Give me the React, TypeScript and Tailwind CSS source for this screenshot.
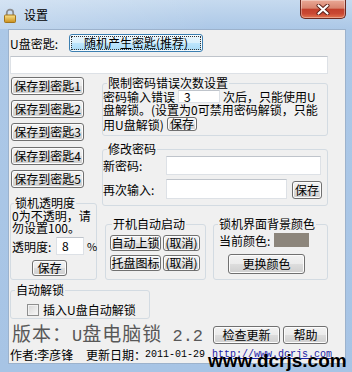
import React from "react";

const cjk = "font-['Noto_Sans_CJK_SC',sans-serif]";
const mono = "font-['Liberation_Mono',monospace]";

function Btn({ className = "", children }: { className?: string; children: React.ReactNode }) {
  return (
    <button
      type="button"
      className={`flex shrink-0 items-center justify-center rounded-[3px] border border-[#707070] bg-[linear-gradient(#f2f2f2_0%,#ebebeb_50%,#dddddd_50%,#cfcfcf_100%)] p-0 text-[12px] leading-[12px] text-black shadow-[inset_0_0_0_1px_#fcfcfc] ${className}`}
    >
      {children}
    </button>
  );
}

function Field({ className = "", value = "" }: { className?: string; value?: string }) {
  return (
    <div className={`flex shrink-0 items-center border border-[#dde1e6] border-t-[#bfc4cb] bg-white pl-[5px] text-[12px] leading-[12px] ${className}`}>
      {value}
    </div>
  );
}

function Group({
  title,
  className = "",
  legend = "",
  children,
}: {
  title: string;
  className?: string;
  legend?: string;
  children: React.ReactNode;
}) {
  return (
    <fieldset className={`min-w-0 shrink-0 rounded-[3px] border border-[#d3dbe2] ${className}`}>
      <legend className={`px-[1px] text-[12px] leading-[14px] ${legend}`}>{title}</legend>
      {children}
    </fieldset>
  );
}

function Lock() {
  return (
    <svg width="14" height="15" viewBox="0 0 14 15">
      <defs>
        <linearGradient id="gold" x1="0" y1="0" x2="0" y2="1">
          <stop offset="0" stopColor="#fbe48a" />
          <stop offset="1" stopColor="#c98d1c" />
        </linearGradient>
      </defs>
      <path d="M3.8 7.5V4.8a3.2 3.2 0 0 1 6.4 0v2.7" fill="none" stroke="#8d8d8d" strokeWidth="1.8" />
      <rect x="1.5" y="7" width="11" height="7.5" rx="1" fill="url(#gold)" stroke="#a3741a" />
    </svg>
  );
}

export default function App() {
  return (
    <div className={`relative h-[372px] w-[352px] overflow-hidden bg-[linear-gradient(180deg,#c6daef_0px,#acc8e7_29px,#a7c4e5_100%)] text-black ${cjk}`}>
      {/* Title bar */}
      <div className="flex h-[29px] items-center bg-[linear-gradient(90deg,rgba(255,255,255,0.25),rgba(255,255,255,0)_60%)]">
        <div className="ml-[3px] mt-[1px]">
          <Lock />
        </div>
        <span className="ml-[7px] text-[12px] leading-[12px]">设置</span>
        <div className="flex-1" />
        <div className="mr-[6px] flex h-[19px] w-[46px] shrink-0 items-center justify-center self-start rounded-b-[5px] border border-t-0 border-[#6b2a21] bg-[linear-gradient(#eaa996_0%,#d8846f_45%,#c3402c_52%,#c94833_75%,#e2744f_100%)] shadow-[inset_0_0_0_1px_rgba(255,255,255,0.35)]">
          <svg width="14" height="11" viewBox="0 0 14 11">
            <path d="M2.5 1.5 L11.5 9.5 M11.5 1.5 L2.5 9.5" stroke="#5a1f17" strokeWidth="4" strokeLinecap="round" />
            <path d="M2.5 1.5 L11.5 9.5 M11.5 1.5 L2.5 9.5" stroke="#fff" strokeWidth="2.2" strokeLinecap="round" />
          </svg>
        </div>
      </div>

      {/* Client area */}
      <div className="ml-[8px] flex h-[335px] w-[338px] flex-col border border-[#9cb2cc] bg-[#f0f0f0] text-[12px] leading-[13px]">
        <div className="mt-[4px] flex h-[18px] items-center">
          <span className="ml-[1px] w-[59px] shrink-0">U盘密匙:</span>
          <button
            type="button"
            className="flex h-[18px] w-[134px] shrink-0 items-center justify-center rounded-[3px] border border-[#3c7fb1] bg-[linear-gradient(#eaf6fd_0%,#d9f0fc_50%,#bee6fd_50%,#a7d9f5_100%)] p-[2px] text-[12px] leading-[12px] shadow-[inset_0_0_0_1px_#f4fbff]"
          >
            <span className="flex h-full w-full items-center justify-center outline outline-1 outline-dotted outline-[#333]">
              随机产生密匙(推荐)
            </span>
          </button>
        </div>
        <Field className="ml-[1px] mt-[4px] h-[18px] w-[318px]" />

        <div className="flex">
          {/* Left column */}
          <div className="ml-[1px] flex w-[87px] shrink-0 flex-col">
            <Btn className="ml-[1px] mt-[3px] h-[18px] w-[73px]">保存到密匙1</Btn>
            <Btn className="ml-[1px] mt-[5px] h-[18px] w-[73px]">保存到密匙2</Btn>
            <Btn className="ml-[1px] mt-[5px] h-[18px] w-[73px]">保存到密匙3</Btn>
            <Btn className="ml-[1px] mt-[6px] h-[18px] w-[73px]">保存到密匙4</Btn>
            <Btn className="ml-[1px] mt-[5px] h-[18px] w-[73px]">保存到密匙5</Btn>

            <Group title="锁机透明度" className="mt-[8px] w-[87px] pb-[3px]" legend="ml-[3px]">
              <div className="pl-[1px] leading-[12px]">0为不透明，请</div>
              <div className="pl-[1px] leading-[12px]">勿设置100。</div>
              <div className="mt-[3px] flex h-[18px] items-center">
                <span className="w-[45px] shrink-0 pl-[1px]">透明度:</span>
                <Field className="h-[18px] w-[28px]" value="8" />
                <span className="ml-[3px] text-[11px]">%</span>
              </div>
              <Btn className="ml-[21px] mt-[5px] h-[16px] w-[35px]">保存</Btn>
            </Group>
          </div>

          {/* Right column */}
          <div className="ml-[5px] flex w-[226px] shrink-0 flex-col">
            <Group title="限制密码错误次数设置" className="mt-[2px] w-[226px] pb-[4px]" legend="ml-[4px]">
              <div className="flex h-[13px] items-start whitespace-nowrap">
                <span className="w-[75px] shrink-0">密码输入错误</span>
                <Field className="h-[13px] w-[42px]" value="3" />
                <span className="ml-[3px]">次后，只能使用U</span>
              </div>
              <div className="h-[13px] whitespace-nowrap">盘解锁。(设置为0可禁用密码解锁，只能</div>
              <div className="flex h-[15px] items-end whitespace-nowrap">
                <span className="w-[64px] shrink-0">用U盘解锁)</span>
                <Btn className="h-[14px] w-[30px] rounded-[2px]">保存</Btn>
              </div>
            </Group>

            <Group title="修改密码" className="mt-[6px] w-[226px] pb-[6px]" legend="ml-[4px]">
              <div className="flex h-[19px] items-center">
                <span className="w-[63px] shrink-0">新密码:</span>
                <Field className="h-[19px] w-[155px]" />
              </div>
              <div className="mt-[4px] flex h-[20px] items-center">
                <span className="w-[63px] shrink-0">再次输入:</span>
                <Field className="h-[20px] w-[121px]" />
                <Btn className="ml-[5px] h-[18px] w-[30px] self-end rounded-[2px]">保存</Btn>
              </div>
            </Group>

            <div className="mt-[11px] flex items-start">
              <Group title="开机自动启动" className="ml-[3px] w-[101px] pb-[8px]" legend="ml-[6px]">
                <div className="ml-[4px] mt-[4px] flex">
                  <Btn className="h-[16px] w-[51px] rounded-[2px]">自动上锁</Btn>
                  <Btn className="ml-[2px] h-[16px] w-[37px] rounded-[2px]">(取消)</Btn>
                </div>
                <div className="ml-[4px] mt-[4px] flex">
                  <Btn className="h-[16px] w-[51px] rounded-[2px]">托盘图标</Btn>
                  <Btn className="ml-[2px] h-[16px] w-[37px] rounded-[2px]">(取消)</Btn>
                </div>
              </Group>

              <Group title="锁机界面背景颜色" className="ml-[7px] w-[115px] pb-[5px]" legend="ml-[4px]">
                <div className="mt-[2px] flex h-[14px] items-center">
                  <span className="w-[60px] shrink-0 pl-[5px]">当前颜色:</span>
                  <div className="h-[14px] w-[35px] bg-[#8c857b]" />
                </div>
                <Btn className="ml-[14px] mt-[7px] h-[20px] w-[77px]">更换颜色</Btn>
              </Group>
            </div>
          </div>
        </div>

        <Group title="自动解锁" className="ml-[1px] mt-[3px] w-[140px] pb-[2px]" legend="ml-[4px]">
          <div className="ml-[16px] mt-[6px] flex h-[13px] items-center">
            <div className="h-[12px] w-[12px] shrink-0 border border-[#8e8f8f] bg-[linear-gradient(135deg,#d6d6d6,#f8f8f8)] shadow-[inset_0_0_0_1px_#f2f2f2]" />
            <span className="ml-[4px]">插入U盘自动解锁</span>
          </div>
        </Group>

        <div className="mt-[6px] flex h-[20px] items-center">
          <span className="ml-[3px] w-[201px] shrink-0 whitespace-nowrap text-[19px] leading-[20px] tracking-[1px] text-[#585858]">
            版本：<span className={`${mono} text-[17px] tracking-normal`}>U</span>盘电脑锁
            <span className={`${mono} text-[17px] tracking-normal`}> 2.2</span>
          </span>
          <Btn className="h-[18px] w-[67px]">检查更新</Btn>
          <Btn className="ml-[3px] h-[18px] w-[45px]">帮助</Btn>
        </div>

        <div className="ml-[1px] mt-[3px] flex h-[13px] items-center whitespace-nowrap">
          <span className="w-[76px] shrink-0">作者:李彦锋</span>
          <span className="w-[59px] shrink-0">更新日期：</span>
          <span className={`${mono} w-[67px] shrink-0 text-[10px]`}>2011-01-29</span>
          <span className={`${mono} text-[10px] text-[#1c22a6] underline`}>http://www.dcrjs.com</span>
        </div>
      </div>

      {/* Site watermark */}
      <div className="absolute left-[208px] top-[351px] font-['Liberation_Sans',sans-serif] text-[19px] font-bold leading-[19px] text-black">
        www.dcrjs.com
      </div>
    </div>
  );
}
